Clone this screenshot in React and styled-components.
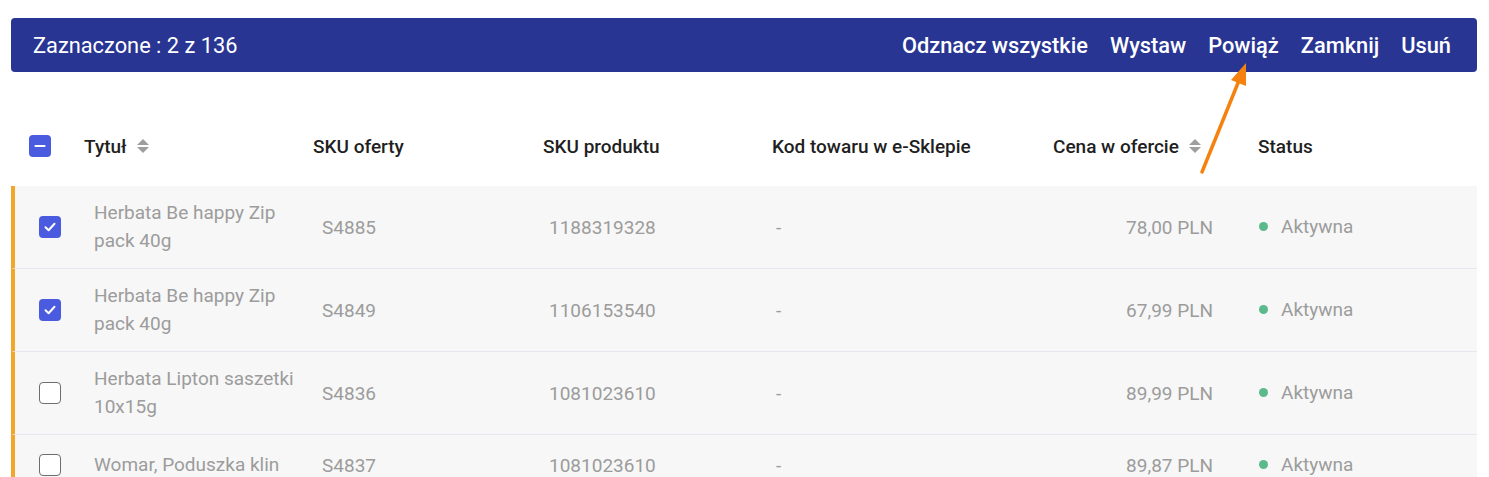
import React from 'react'
import styled, { createGlobalStyle } from 'styled-components'

const Global = createGlobalStyle`
    body {
        margin: 0;
        background: #ffffff;
        font-family: Roboto, "Liberation Sans", Arial, sans-serif;
        overflow: hidden;
    }
`

const Page = styled.div`
    position: relative;
    padding: 18px 12px 0 11px;
`

const Banner = styled.div`
    height: 54px;
    background: #283593;
    border-radius: 4px;
    display: flex;
    align-items: center;
    justify-content: space-between;
    padding: 0 26px 0 22px;
    color: #ffffff;
`

const Count = styled.span`
    font-size: 21.8px;
    font-weight: 400;
`

const Actions = styled.div`
    display: flex;
    gap: 22px;
`

const Action = styled.span`
    font-size: 21.8px;
    font-weight: 500;
    cursor: pointer;
`

const Table = styled.div`
    margin-top: 34px;
`

const HeadRow = styled.div`
    height: 80px;
    display: grid;
    grid-template-columns: 73px 229px 230px 229px 281px 205px 1fr;
    align-items: center;
    font-size: 19px;
    font-weight: 500;
    color: #1f1f1f;
`

const HeadCell = styled.div`
    display: flex;
    align-items: center;
    gap: 10px;
    padding-left: ${(p) => p.$pad || 0}px;
`

const Row = styled.div`
    display: grid;
    grid-template-columns: 79px 228px 227px 227px 239px 198px 1fr;
    align-items: center;
    min-height: 60px;
    background: #f7f7f7;
    border-left: 4px solid #f2a72c;
    border-bottom: 1px solid #e7e7ef;
    font-size: 19px;
    color: #9c9c9c;
`

const Cell = styled.div`
    padding-left: ${(p) => p.$pad || 0}px;
    text-align: ${(p) => (p.$right ? 'right' : 'left')};
`

const Title = styled.div`
    max-width: 215px;
    line-height: 28px;
    padding: 13px 0;
`

const Box = styled.span`
    width: 22px;
    height: 22px;
    box-sizing: border-box;
    border-radius: 4px;
    display: flex;
    align-items: center;
    justify-content: center;
    background: ${(p) => (p.$on ? '#4a5be0' : '#ffffff')};
    border: ${(p) => (p.$on ? 'none' : '1.5px solid #6d6d6d')};
`

const Status = styled.div`
    display: flex;
    align-items: center;
    gap: 13px;
    padding-left: 46px;
    margin-top: -2px;
`

const Dot = styled.span`
    width: 9px;
    height: 9px;
    border-radius: 50%;
    background: #5bb98b;
`

const Arrow = styled.svg`
    position: absolute;
    left: 0;
    top: 0;
    pointer-events: none;
`

const Sort = () => (
    <svg width="12" height="16" viewBox="0 0 12 16">
        <path d="M6 1 L12 7 L0 7 Z" fill="#9e9e9e" />
        <path d="M0 9 L12 9 L6 15 Z" fill="#9e9e9e" />
    </svg>
)

const Check = ({ state }) => (
    <Box $on={state !== 'off'}>
        {state === 'on' && (
            <svg width="14" height="14" viewBox="0 0 14 14">
                <path d="M2.5 7.3 L5.6 10.2 L11.5 3.8" fill="none" stroke="#fff" strokeWidth="2" strokeLinecap="round" strokeLinejoin="round" />
            </svg>
        )}
        {state === 'mixed' && (
            <svg width="14" height="14" viewBox="0 0 14 14">
                <path d="M2.5 7 L11.5 7" stroke="#fff" strokeWidth="2.2" strokeLinecap="round" />
            </svg>
        )}
    </Box>
)

const rows = [
    { on: true, title: 'Herbata Be happy Zip pack 40g', sku: 'S4885', prod: '1188319328', price: '78,00 PLN' },
    { on: true, title: 'Herbata Be happy Zip pack 40g', sku: 'S4849', prod: '1106153540', price: '67,99 PLN' },
    { on: false, title: 'Herbata Lipton saszetki 10x15g', sku: 'S4836', prod: '1081023610', price: '89,99 PLN' },
    { on: false, title: 'Womar, Poduszka klin', sku: 'S4837', prod: '1081023610', price: '89,87 PLN' },
]

export default function App() {
    return (
        <Page>
            <Global />
            <Banner>
                <Count>Zaznaczone : 2 z 136</Count>
                <Actions>
                    <Action>Odznacz wszystkie</Action>
                    <Action>Wystaw</Action>
                    <Action>Powiąż</Action>
                    <Action>Zamknij</Action>
                    <Action>Usuń</Action>
                </Actions>
            </Banner>
            <Table>
                <HeadRow>
                    <HeadCell $pad={18}><Check state="mixed" /></HeadCell>
                    <HeadCell>Tytuł <Sort /></HeadCell>
                    <HeadCell>SKU oferty</HeadCell>
                    <HeadCell>SKU produktu</HeadCell>
                    <HeadCell>Kod towaru w e-Sklepie</HeadCell>
                    <HeadCell>Cena w ofercie <Sort /></HeadCell>
                    <HeadCell>Status</HeadCell>
                </HeadRow>
                {rows.map((r, i) => (
                    <Row key={i}>
                        <Cell $pad={24}><Check state={r.on ? 'on' : 'off'} /></Cell>
                        <Cell><Title>{r.title}</Title></Cell>
                        <Cell>{r.sku}</Cell>
                        <Cell>{r.prod}</Cell>
                        <Cell>-</Cell>
                        <Cell $right>{r.price}</Cell>
                        <Status><Dot />Aktywna</Status>
                    </Row>
                ))}
            </Table>
            <Arrow width="1489" height="477">
                <line x1="1202" y1="172" x2="1240" y2="78" stroke="#f5820f" strokeWidth="3.5" strokeLinecap="round" />
                <path d="M1246 63 L1246 86 L1231 80 Z" fill="#f5820f" />
            </Arrow>
        </Page>
    )
}
